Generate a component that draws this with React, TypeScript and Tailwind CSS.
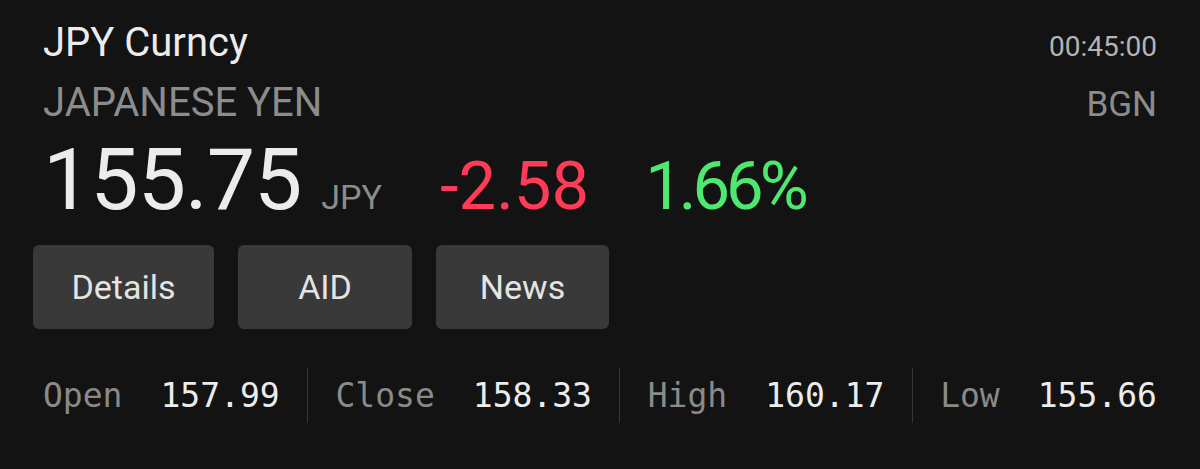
const stats = [
  { label: 'Open', value: '157.99' },
  { label: 'Close', value: '158.33' },
  { label: 'High', value: '160.17' },
  { label: 'Low', value: '155.66' },
];

const buttons = [
  { label: 'Details', w: 'w-[181px]' },
  { label: 'AID', w: 'w-[174px]' },
  { label: 'News', w: 'w-[173px]' },
];

export default function App() {
  return (
    <div className="w-[1200px] h-[469px] bg-[#131313] px-[43px] pt-[23px] font-['Roboto',sans-serif] overflow-hidden">
      {/* header */}
      <div className="flex items-baseline justify-between">
        <div className="text-[40px] leading-[40px] text-[#ececec]">JPY Curncy</div>
        <div className="text-[28px] leading-[40px] text-[#b4b4b4]">00:45:00</div>
      </div>
      <div className="flex items-baseline justify-between mt-[16px]">
        <div className="text-[40px] leading-[40px] text-[#8c8c8c]">JAPANESE YEN</div>
        <div className="text-[35px] leading-[40px] text-[#8c8c8c]">BGN</div>
      </div>

      {/* price row */}
      <div className="flex items-baseline mt-[12px] leading-none">
        <span className="text-[86px] tracking-[-1px] text-[#ececec]">155.75</span>
        <span className="text-[34px] text-[#8c8c8c] ml-[20px]">JPY</span>
        <span className="text-[67px] text-[#ff3b57] ml-[58px]">-2.58</span>
        <span className="text-[67px] tracking-[-4px] text-[#4ee870] ml-[56px]">1.66%</span>
      </div>

      {/* buttons */}
      <div className="flex gap-[24px] -ml-[10px] mt-[22px]">
        {buttons.map((b) => (
          <div
            key={b.label}
            className={`${b.w} h-[84px] rounded-[6px] bg-[#393939] flex items-center justify-center text-[34px] text-[#e4e4e4]`}
          >
            {b.label}
          </div>
        ))}
      </div>

      {/* stats */}
      <div className="flex items-center justify-between mt-[39px]">
        {stats.map((s, i) => (
          <div key={s.label} className="contents">
            {i > 0 && <div className="w-px h-[55px] bg-[#363636]" />}
            <div className="flex items-baseline gap-[38px] font-['DejaVu_Sans_Mono',monospace] text-[33px] leading-none">
              <span className="text-[#8a8a8a]">{s.label}</span>
              <span className="text-[#ececec]">{s.value}</span>
            </div>
          </div>
        ))}
      </div>
    </div>
  );
}
